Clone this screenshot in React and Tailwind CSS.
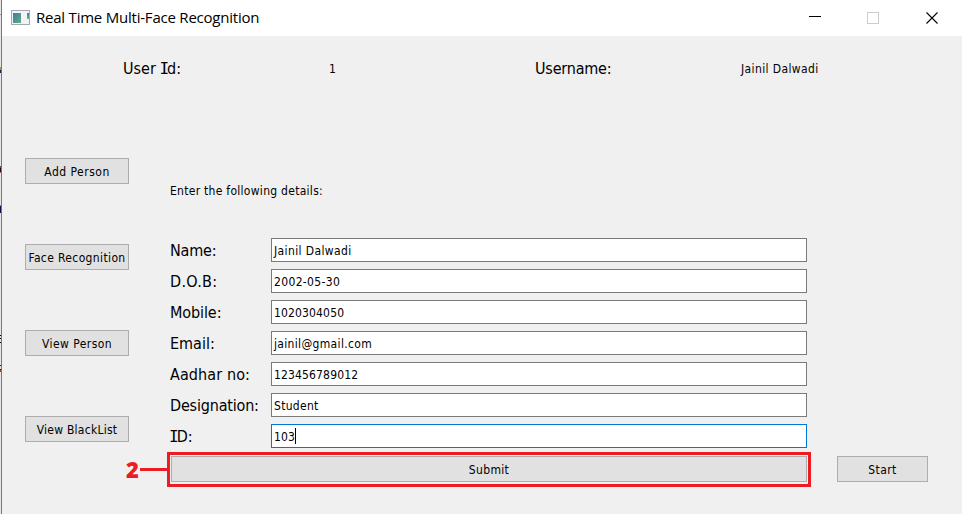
const FIELDS = [
  { label: 'Name:', value: 'Jainil Dalwadi', labelCls: 'tracking-[-0.2px]', valueCls: 'tracking-[0.38px]' },
  { label: 'D.O.B:', value: '2002-05-30', labelCls: 'tracking-[0.3px]', valueCls: 'tracking-[0.35px]' },
  { label: 'Mobile:', value: '1020304050', labelCls: 'tracking-[-0.1px]', valueCls: 'tracking-[0.15px]' },
  { label: 'Email:', value: 'jainil@gmail.com', labelCls: 'tracking-[0px]', valueCls: 'tracking-[0.33px]' },
  { label: 'Aadhar no:', value: '123456789012', labelCls: 'tracking-[0.1px]', valueCls: 'tracking-[0.15px]' },
  { label: 'Designation:', value: 'Student', labelCls: 'tracking-[-0.18px]', valueCls: 'tracking-[0.3px]' },
  { label: 'ID:', value: '103', labelCls: 'tracking-[0px]', valueCls: 'tracking-[0.1px]', focused: true },
];

const SIDE_BUTTONS = [
  { text: 'Add Person', cls: 'tracking-[0.5px]' },
  { text: 'Face Recognition', cls: 'tracking-[0.37px]' },
  { text: 'View Person', cls: 'tracking-[0.45px]' },
  { text: 'View BlackList', cls: 'tracking-[0.25px]' },
];

function SerifI() {
  return <span className="-ml-px font-['DejaVu_Sans_Mono',monospace] text-[16px] leading-4 tracking-[-2px]">I</span>;
}

function Label({ text, cls }) {
  const at = text.indexOf('I');
  return (
    <span className={`text-[16px] whitespace-pre ${cls}`}>
      {at < 0 ? text : <>{text.slice(0, at)}<SerifI />{text.slice(at + 1)}</>}
    </span>
  );
}

function Button({ text, className = '', cls = '' }) {
  return (
    <button className={`flex h-[26px] items-center justify-center border border-[#adadad] bg-[#e1e1e1] pt-[2px] whitespace-nowrap ${className}`}>
      <span className={cls}>{text}</span>
    </button>
  );
}

function TitleBar() {
  return (
    <div className="flex h-9 shrink-0 items-center bg-white">
      <svg className="ml-[9px] h-[16px] w-[19px] shrink-0" viewBox="0 0 19 16" shapeRendering="crispEdges">
        <defs>
          <linearGradient id="pane" x1="0" y1="0" x2="1" y2="1">
            <stop offset="0" stopColor="#4577a8" />
            <stop offset="1" stopColor="#5fae78" />
          </linearGradient>
          <linearGradient id="paneSmall" x1="0" y1="0" x2="0" y2="1">
            <stop offset="0" stopColor="#4577a8" />
            <stop offset="1" stopColor="#6db98a" />
          </linearGradient>
        </defs>
        <rect x="0.5" y="0.5" width="18" height="14" fill="#f3f3f3" stroke="#a3a7af" />
        <rect x="2" y="3" width="8" height="10" fill="url(#pane)" />
        <rect x="16" y="3" width="2" height="6" fill="url(#paneSmall)" />
      </svg>
      <span className="mb-[2px] ml-[6px] font-['Open_Sans','Noto_Sans',sans-serif] text-[15px] leading-5 tracking-[-0.22px] whitespace-nowrap">
        Real Time Multi-Face Recognition
      </span>
      <svg className="mr-[23px] ml-auto h-[12px] w-[130px]" viewBox="0 0 130 12">
        <path d="M0 4.5H12" stroke="#000" />
        <rect x="58.5" y="0.5" width="11" height="11" fill="none" stroke="#ccc" />
        <path d="M117.5 0.5L128.5 11.5M128.5 0.5L117.5 11.5" stroke="#000" strokeWidth="1.1" />
      </svg>
    </div>
  );
}

// Sliver of the window behind, visible along the left edge.
function BackgroundEdge() {
  return (
    <div className="flex w-px shrink-0 flex-col bg-[#e6e6e6]">
      <div className="mt-[14px] h-px bg-[#999]" />
      <div className="mt-[52px] h-[3px] bg-[#c09030]" />
      <div className="h-[3px] bg-[#152050]" />
      <div className="mt-[93px] h-[2px] bg-[#8a4020]" />
      <div className="h-[4px] bg-[#101040]" />
      <div className="h-px bg-[#c07030]" />
      <div className="mt-[32px] h-px bg-[#50a0e0]" />
      <div className="h-[7px] bg-[#200848]" />
      <div className="mt-[122px] h-px bg-black" />
      <div className="mt-[2px] h-px bg-black" />
      <div className="mt-[3px] h-px bg-black" />
      <div className="mt-[22px] h-px bg-[#102060]" />
      <div className="mt-[3px] h-px bg-[#102060]" />
      <div className="h-[2px] bg-[#a04020]" />
    </div>
  );
}

export default function App() {
  return (
    <div className="flex h-[514px] w-[962px] overflow-hidden bg-[#f0f0f0] font-['DejaVu_Sans_Condensed','DejaVu_Sans',sans-serif] text-[12px] leading-4 text-black">
      <BackgroundEdge />
      <div className="flex min-w-0 grow flex-col border-l border-[#777]">
        <TitleBar />
        <div className="flex h-[122px] pt-[23px]">
          <div className="w-[206px] pl-[121px] leading-5"><Label text="User Id:" cls="tracking-[0px]" /></div>
          <div className="grid w-[412px] grid-cols-2 leading-5">
            <span className="pl-[121px]">1</span>
            <span className="pl-[121px]"><Label text="Username:" cls="tracking-[-0.2px]" /></span>
          </div>
          <span className="pl-[121px] leading-5 tracking-[0.38px]">Jainil Dalwadi</span>
        </div>
        <div className="flex grow">
          <div className="ml-[23px] flex w-[104px] flex-col gap-[60px]">
            {SIDE_BUTTONS.map((b) => <Button key={b.text} text={b.text} cls={b.cls} />)}
          </div>
          <div className="ml-[38px] w-[644px] pt-[25px]">
            <p className="ml-[3px] h-4 tracking-[0.28px]">Enter the following details:</p>
            <div className="mt-[39px] ml-[3px] flex flex-col gap-[7px]">
              {FIELDS.map((f) => (
                <div key={f.label} className="flex h-[24px] items-center">
                  <div className="w-[101px] pt-[2px]"><Label text={f.label} cls={f.labelCls} /></div>
                  <div className={`flex h-full w-[536px] items-center border bg-white pt-[2px] pl-[2px] ${f.focused ? 'border-[#0078d7]' : 'border-[#7a7a7a]'}`}>
                    <span className={f.valueCls}>{f.value}</span>
                    {f.focused && <span className="mb-[2px] h-[16px] w-px bg-black" />}
                  </div>
                </div>
              ))}
            </div>
            <div className="relative mt-[4px] h-[35px] w-[644px] border-[3px] border-[#ed1c24] px-px pt-px">
              <Button text="Submit" className="w-[636px]" cls="tracking-[0.35px]" />
              <div className="absolute top-[3px] right-full mr-[3px] flex h-[22px] items-center text-[#ed1c24]">
                <span className="w-[14px] font-['Open_Sans',sans-serif] text-[22px] leading-5 font-extrabold">2</span>
                <span className="h-[3px] w-[27px] bg-[#ed1c24]" />
              </div>
            </div>
          </div>
          <Button text="Start" className="mt-[298px] ml-[26px] w-[91px]" cls="tracking-[0.4px]" />
        </div>
      </div>
    </div>
  );
}
